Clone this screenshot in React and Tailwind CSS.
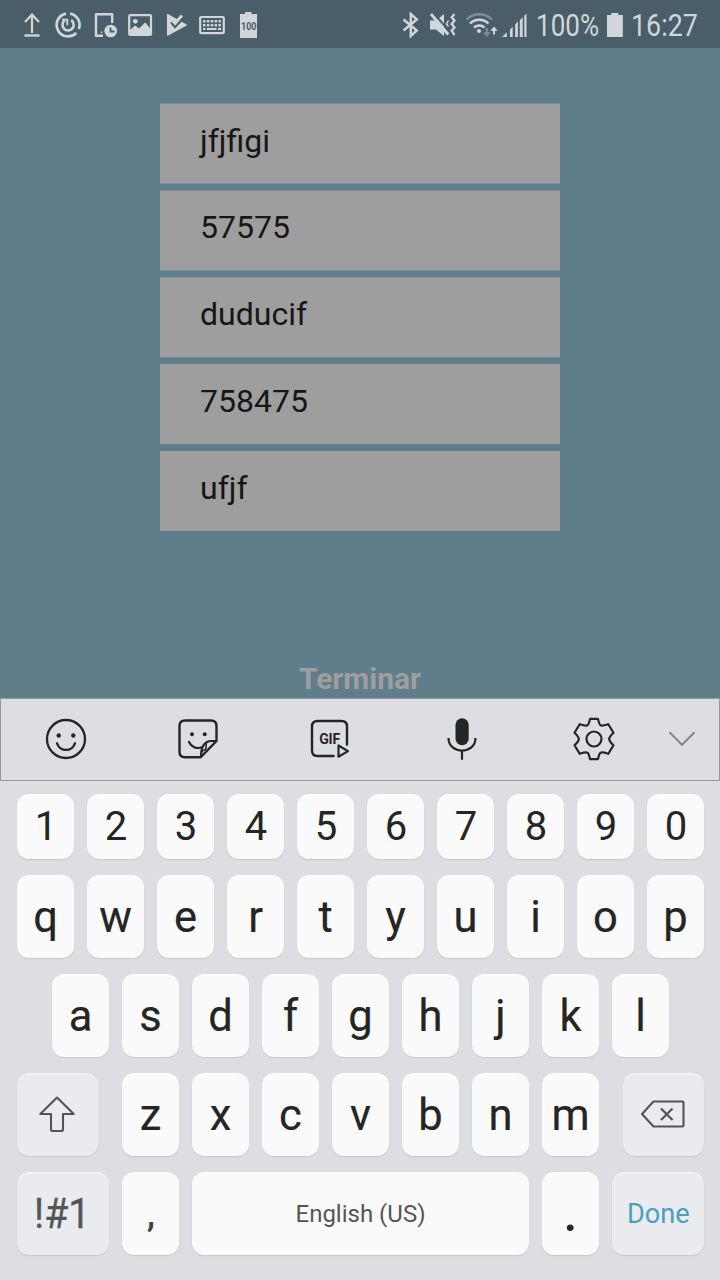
const INK = "#252525";

function Glyph({ x, y = 0, w, h = 48, className = "", children }) {
  return (
    <svg
      viewBox={`${x} ${y} ${w} ${h}`}
      width={w}
      height={h}
      fill="none"
      className={`shrink-0 ${className}`}
      aria-hidden="true"
    >
      {children}
    </svg>
  );
}

function StatusBar() {
  const c = "#d1d6da";
  return (
    <header className="flex h-12 shrink-0 items-center bg-[#495e69] pl-[14px] text-[#d1d6da]">
      <Glyph x={14} w={36}>
        <path d="M32 33V15M25 22l7-7.5 7 7.5" stroke={c} strokeWidth="2.2" />
        <path d="M24.5 35.5h15" stroke={c} strokeWidth="2.4" />
      </Glyph>
      <Glyph x={50} w={36}>
        <path d="M66 13.6A11.5 11.5 0 1 0 76.3 33M78.8 29A11.5 11.5 0 0 0 70 13.6" stroke={c} strokeWidth="2.6" />
        <path d="M71.2 20.2a5.6 5.6 0 1 1-6.6 0.3" stroke={c} strokeWidth="2.6" />
        <path d="M62 19.7h5.3v5.6" stroke={c} strokeWidth="1.8" />
      </Glyph>
      <Glyph x={86} w={36}>
        <path d="M103 35.8H96V14.2h16.2V23" stroke={c} strokeWidth="2.4" strokeLinejoin="round" />
        <path d="M101.5 31.5v1.5" stroke={c} strokeWidth="1.5" />
        <circle cx="110.7" cy="31" r="6.3" fill={c} />
        <path d="M110.5 27.5v4h4" stroke="#495e69" strokeWidth="1.8" />
      </Glyph>
      <Glyph x={122} w={36}>
        <rect x="129.2" y="15.2" width="21.8" height="19.8" rx="1" stroke={c} strokeWidth="2.2" />
        <circle cx="135.3" cy="21.3" r="2.4" fill={c} />
        <path d="M130 35v-5l5-4.5 4 3 6.2-6 6 7V35z" fill={c} />
      </Glyph>
      <Glyph x={158} w={36}>
        <path d="M167.6 14.6 186.3 25 167.6 35.2z" fill={c} stroke={c} strokeWidth="1.2" strokeLinejoin="round" />
        <path d="m173 20.5 2 2.7 7-7.7" stroke={c} strokeWidth="3" />
        <path d="m171 22.5 4 4.7 9-9.7" stroke="#495e69" strokeWidth="2" />
      </Glyph>
      <Glyph x={194} w={36}>
        <rect x="200.2" y="17" width="23.6" height="16.2" rx="1" stroke={c} strokeWidth="2.2" />
        <path d="M203 21.3h18M203 25.2h18" stroke={c} strokeWidth="2.4" strokeDasharray="2.5 1.35" />
        <path d="M203 29h2.5M207 29h9.5M218 29h3" stroke={c} strokeWidth="2" />
      </Glyph>
      <Glyph x={230} w={36}>
        <path d="M240 14h5v-2h6.5v2h5.5v24h-17z" fill={c} />
        <text x="241" y="30" fill="#495e69" fontSize="10" fontWeight="700" fontFamily="Roboto, sans-serif" textLength="15.5" lengthAdjust="spacingAndGlyphs">100</text>
      </Glyph>
      <Glyph x={398} w={26} className="ml-[132px]">
        <path d="m403.5 19.5 13.3 11-6 5.5V14l6 5.5-13.3 11" stroke={c} strokeWidth="2.4" />
      </Glyph>
      <Glyph x={424} w={36}>
        <path d="M430 20.5h6l8-6.5v22l-8-6.5h-6z" fill={c} />
        <path d="m433 12.5 16.5 19" stroke="#495e69" strokeWidth="2" />
        <path d="m431 14 17.2 20.5" stroke={c} strokeWidth="2.8" />
        <path d="m454.5 14-2.8 3.3 2.8 3.3-2.8 3.4 2.8 3.4-2.8 3.3 2.8 4.5" stroke={c} strokeWidth="2.3" />
        <path d="M448.5 20.5 446.5 24l2 2.5" stroke={c} strokeWidth="1.5" />
      </Glyph>
      <Glyph x={460} w={40}>
        <path d="M466.5 19.5c7-7 18.5-7 25.5 0" stroke="#809097" strokeWidth="2.4" />
        <path d="M470 23.5c5.2-5 13.3-5 18.5 0M474 27.6c3-2.8 7.5-2.8 10.5 0" stroke={c} strokeWidth="2.4" />
        <circle cx="479" cy="31" r="2" fill={c} />
        <path d="M486.8 28v5.5" stroke="#809097" strokeWidth="2" />
        <path d="M483 32.2h7.6l-3.8 4.5z" fill="#809097" />
        <path d="M494 29v5.5" stroke={c} strokeWidth="2" />
        <path d="M490.3 31h7.4l-3.7-4.6z" fill={c} />
      </Glyph>
      <Glyph x={500} w={36}>
        <path d="m502 37 4.8-4.8V37zM510 29.5l2.7-2.7V37H510zM515.2 24.3l2.7-2.7V37h-2.7zM519.8 20.2l2.9-2.9V37h-2.9zM524.3 15.7l2.2-2.2V37h-2.2z" fill={c} />
      </Glyph>
      <span className="mt-0.5 w-[68px] origin-left scale-x-[0.84] whitespace-nowrap text-[31px] leading-none">100%</span>
      <Glyph x={604} w={26}>
        <path d="M607 15h4.3v-2h7v2h4.5v22H607z" fill={c} />
      </Glyph>
      <span className="mt-0.5 ml-px origin-left scale-x-[0.865] whitespace-nowrap text-[31px] leading-none">16:27</span>
    </header>
  );
}

const fields = [
  ["jfjfigi", "mt-[55px] h-[81px] border-y border-[#7d8e94] pb-[6px]"],
  ["57575", "mt-[6px] h-[81px] border-y border-[#7d8e94] pb-[8px]"],
  ["duducif", "mt-[6px] h-[81px] border-y border-t-[#8a9498] border-b-[#6f868f] pb-[8px]"],
  ["758475", "mt-[6px] h-[80px] pb-[6px]"],
  ["ufjf", "mt-[7px] h-[80px] pb-[6px]"],
];

function Form() {
  return (
    <main className="flex h-[650px] shrink-0 flex-col items-center overflow-hidden bg-[#607d8b]">
      {fields.map(([value, box]) => (
        <div
          key={value}
          className={`flex w-[400px] shrink-0 items-center bg-[#9e9e9e] pl-10 text-[32px] leading-none text-[#161616] ${box}`}
        >
          {value}
        </div>
      ))}
      <button className="mt-[130px] text-[30px] leading-[35px] font-bold text-[#9e9e9e]">Terminar</button>
    </main>
  );
}

function Toolbar() {
  return (
    <div className="flex h-[83px] shrink-0 items-center border border-[#97989b]">
      <Glyph x={1} y={699} w={131} h={81}>
        <circle cx="66" cy="739" r="19" stroke={INK} strokeWidth="2.3" />
        <circle cx="58.7" cy="735.5" r="2.2" fill={INK} />
        <circle cx="73.3" cy="735.5" r="2.2" fill={INK} />
        <path d="M57 743.3c3.4 8.8 14.6 8.8 18 0" stroke={INK} strokeWidth="2.3" strokeLinecap="round" />
      </Glyph>
      <Glyph x={132} y={699} w={132} h={81}>
        <path d="M200.5 757.3H185q-5.5 0-5.5-5.5V726q0-5.5 5.5-5.5h26q5.5 0 5.5 5.5v15z" stroke={INK} strokeWidth="2.4" strokeLinejoin="round" />
        <path d="M216.5 741h-5c-6.5 0-10.5 5-10.5 16" stroke={INK} strokeWidth="2.2" />
        <path d="M206.5 742.5c-.5 2.5-.2 5-1 7-2 .5-3.5 1.5-4.5 3" stroke={INK} strokeWidth="1.6" />
        <circle cx="192" cy="734.2" r="2" fill={INK} />
        <circle cx="204.7" cy="734.2" r="2" fill={INK} />
        <path d="M189 742c2.3 5 7.5 7.2 13 5.3" stroke={INK} strokeWidth="2.2" strokeLinecap="round" />
      </Glyph>
      <Glyph x={264} y={699} w={132} h={81}>
        <path d="M333.5 756H317.5q-5.5 0-5.5-5.5V726.5q0-5.5 5.5-5.5h24q5.500 0 5.500 5.500V744.500" stroke={INK} strokeWidth="2.400" strokeLinecap="round" />
        <text x="319.200" y="743.700" fill={INK} fontSize="14" fontWeight="700" fontFamily="Roboto, sans-serif" textLength="21">GIF</text>
        <path d="M338.500 745.500v11.200l9.500-5.600z" fill="#dddee2" stroke={INK} strokeWidth="2.200" strokeLinejoin="round" />
      </Glyph>
      <Glyph x={396} y={699} w={132} h={81}>
        <rect x="455.5" y="718.2" width="13.2" height="27" rx="6.6" fill={INK} />
        <path d="M448.500 738c0 16.800 27 16.800 27 0M462 751v8.700" stroke={INK} strokeWidth="2.200" />
      </Glyph>
      <Glyph x={528} y={699} w={132} h={81}>
        <path d="M590 718.900h8q1.200 5.800 2.800 6.500 1.500.8 7.500-1.200l5.200 8.500q-4.300 4-4.300 6.300t4.300 6.300l-5.200 8.500q-6-2-7.500-1.200-1.600.7-2.800 6.500h-8q-1.200-5.800-2.800-6.500-1.500-.8-7.500 1.200l-5.200-8.500q4.300-4 4.300-6.300t-4.300-6.300l5.200-8.500q6 2 7.500 1.200 1.600-.7 2.800-6.500z" stroke={INK} strokeWidth="2.200" strokeLinejoin="round" />
        <circle cx="594" cy="739" r="7.500" stroke={INK} strokeWidth="2.200" />
      </Glyph>
      <Glyph x={660} y={699} w={59} h={81}>
        <path d="m669.500 732.200 12.500 12.600 12.500-12.600" stroke="#858689" strokeWidth="2" />
      </Glyph>
    </div>
  );
}

const letter = "h-[83px] text-[43.5px] [-webkit-text-stroke:0.2px_#252525]";
const tall = "h-[83px] pb-[2px]";

function Key({ className = "w-[57px]", size = letter, tone = "bg-[#fafafa] text-[#252525]", children }) {
  return (
    <button
      className={`flex shrink-0 items-center justify-center rounded-xl border-t-2 border-t-white/40 leading-none shadow-[0_1px_1px_#c6c7cb] ${size} ${tone} ${className}`}
    >
      {children}
    </button>
  );
}

const soft = "bg-[#e9ebee] text-[#555555]";

function Keyboard() {
  return (
    <section className="flex flex-1 flex-col gap-4 pt-[13px] pr-4 pl-[17px]">
      <div className="flex gap-[13px]">
        {[..."1234567890"].map((k) => (
          <Key key={k} size="h-[65px] pb-[2px] pl-px text-[40px]">{k}</Key>
        ))}
      </div>
      <div className="flex gap-[13px]">
        {[..."qwertyuiop"].map((k) => <Key key={k}>{k}</Key>)}
      </div>
      <div className="flex gap-[13px] pl-[35px]">
        {[..."asdfghjkl"].map((k) => <Key key={k}>{k}</Key>)}
      </div>
      <div className="flex justify-between">
        <Key className="w-[81px]" size={tall} tone={soft}>
          <Glyph x={37} y={1095} w={41} h={40}>
            <path d="m57 1097.5 16.700 16.500H63v15.200q0 1.800-1.800 1.800h-8.400q-1.800 0-1.800-1.800v-15.200H40.300z" stroke="#555" strokeWidth="2.100" strokeLinejoin="round" />
          </Glyph>
        </Key>
        <div className="flex gap-[13px]">
          {[..."zxcvbnm"].map((k) => <Key key={k}>{k}</Key>)}
        </div>
        <Key className="w-[81px]" size={tall} tone={soft}>
          <Glyph x={639} y={1095} w={49} h={40}>
            <path d="M653.500 1101.500h29q1 0 1 1v23q0 1-1 1h-29l-11.500-12.500z" stroke="#555" strokeWidth="2.100" strokeLinejoin="round" />
            <path d="m661 1108.500 11.500 11.500m0-11.500L661 1120" stroke="#555" strokeWidth="2.300" />
          </Glyph>
        </Key>
      </div>
      <div className="flex gap-[13px]">
        <Key className="w-[92px]" size="h-[83px] pb-[2px] text-[42px] [-webkit-text-stroke:0.3px_#555555]" tone={soft}>
          <span className="mr-px scale-x-[0.93]">!#1</span>
        </Key>
        <Key tone="bg-[#fafafa] text-[#444444]" size="h-[83px] pb-[2px] pl-px text-[37px] font-medium">,</Key>
        <Key className="w-[337px]" size="h-[83px] pb-[2px] text-[24px]" tone="bg-[#fafafa] text-[#555555]">English (US)</Key>
        <Key size="h-[83px] pb-[2px] text-[50px] font-medium">.</Key>
        <Key className="w-[92px]" size="h-[83px] pb-[2px] text-[28px]" tone="bg-[#e9ebee] text-[#4a9fc0]">
          <span className="scale-x-[0.97]">Done</span>
        </Key>
      </div>
    </section>
  );
}

export default function App() {
  return (
    <div className="flex h-[1280px] w-[720px] flex-col overflow-hidden bg-[#dddee2] font-['Roboto',sans-serif]">
      <StatusBar />
      <Form />
      <Toolbar />
      <Keyboard />
    </div>
  );
}
